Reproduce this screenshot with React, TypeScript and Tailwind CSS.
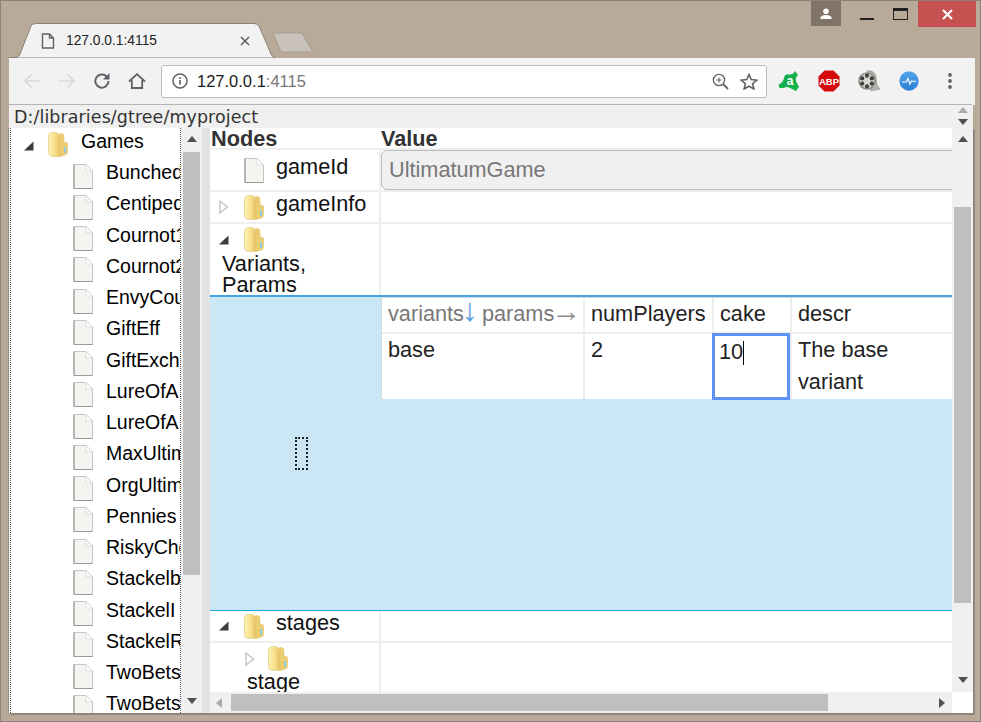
import React from "react";

const games = [
  "Bunched",
  "Centipede",
  "Cournot1",
  "Cournot2",
  "EnvyCou",
  "GiftEff",
  "GiftExch",
  "LureOfA",
  "LureOfA",
  "MaxUltim",
  "OrgUltim",
  "Pennies",
  "RiskyChe",
  "Stackelb",
  "StackelI",
  "StackelR",
  "TwoBets",
  "TwoBets",
];

function FolderIcon({ className = "" }: { className?: string }) {
  return (
    <svg width="20" height="25" viewBox="0 0 20 25" className={`shrink-0 ${className}`}>
      <defs>
        <linearGradient id="fold" x1="0" y1="0" x2="1" y2="0">
          <stop offset="0" stopColor="#fdf3b4" />
          <stop offset="0.55" stopColor="#f8e08e" />
          <stop offset="1" stopColor="#e6c25f" />
        </linearGradient>
      </defs>
      <path d="M0.5 4 Q0.5 0.5 4 0.5 L8 0.5 Q12 1.5 12 5 L12 24.5 L4 24.5 Q0.5 24 0.5 20 Z" fill="url(#fold)" stroke="#e3cd83" strokeWidth="0.7" />
      <path d="M12 1.5 L15 2 Q16 2.5 16 5 L16 10 L19.5 11 L19.5 20 Q19.5 22.5 17.5 23 L12 24.5 Z" fill="#ecce72" stroke="#dcbd62" strokeWidth="0.5" />
      <rect x="16" y="15" width="2" height="6" fill="#8ccbd8" />
    </svg>
  );
}

function FileIcon({ className = "" }: { className?: string }) {
  return (
    <svg width="20" height="25" viewBox="0 0 20 25" className={`shrink-0 ${className}`}>
      <path d="M1 0.5 L13 0.5 L19.5 7 L19.5 24.5 L1 24.5 Z" fill="#f4f5f1" stroke="#c4c4c4" strokeWidth="1" />
      <path d="M1 24.5 L19.5 24.5 M1 0.5 L1 24.5" stroke="#9a9a9a" strokeWidth="1.2" fill="none" />
      <path d="M13 0.5 L13 7 L19.5 7 Z" fill="#fff" stroke="#d4d4d4" strokeWidth="0.8" />
    </svg>
  );
}

function Open({ className = "" }: { className?: string }) {
  return (
    <svg width="10" height="10" viewBox="0 0 10 10" className={`shrink-0 ${className}`}>
      <path d="M0 9.5 L9.5 0.5 L9.5 9.5 Z" fill="#3c3c3c" />
    </svg>
  );
}

function Closed({ className = "" }: { className?: string }) {
  return (
    <svg width="10" height="14" viewBox="0 0 10 14" className={`shrink-0 ${className}`}>
      <path d="M1 1 L8.5 7 L1 13 Z" fill="#fff" stroke="#c4c4c4" strokeWidth="1.4" />
    </svg>
  );
}

function Arrow({ dir, color = "#505050" }: { dir: "up" | "down" | "left" | "right"; color?: string }) {
  const d = {
    up: "M0 7 L5 1 L10 7 Z",
    down: "M0 2 L10 2 L5 8 Z",
    left: "M7 0 L7 10 L1 5 Z",
    right: "M2 0 L2 10 L8 5 Z",
  }[dir];
  return (
    <svg width="10" height="10" viewBox="0 0 10 10" className="shrink-0">
      <path d={d} fill={color} />
    </svg>
  );
}

function Tab() {
  return (
    <div className="relative w-[266px] h-[35px]">
      <svg width="266" height="35" viewBox="0 0 266 35" className="absolute inset-0">
        <path d="M0 35 L0 34.5 L8 34.5 Q10 34 11 31 L22 3 Q23 0.5 27 0.5 L245 0.5 Q249 0.5 250 3 L262 31 Q263 34 266 34.5 L266 35 Z" fill="#f2f2f2" stroke="#8a8175" strokeWidth="1" />
      </svg>
      <div className="relative flex items-center h-full pl-[32px] pr-[25px]">
        <svg width="14" height="16" viewBox="0 0 14 16" className="shrink-0">
          <path d="M1.5 1 L8.5 1 L12.5 5 L12.5 15 L1.5 15 Z M8.5 1 L8.5 5 L12.5 5" fill="none" stroke="#5f6368" strokeWidth="1.4" />
        </svg>
        <span className="ml-[11px] mt-[1px] text-[13.8px] text-[#222]">127.0.0.1:4115</span>
        <svg width="10" height="10" viewBox="0 0 10 10" className="ml-auto">
          <path d="M1 1 L9 9 M9 1 L1 9" stroke="#555" strokeWidth="1.4" />
        </svg>
      </div>
    </div>
  );
}

function ExtensionIcons() {
  return (
    <div className="flex items-center gap-[18px] ml-[11px]">
      <svg width="22" height="22" viewBox="0 0 22 22">
        <path d="M17 1 L20 5 Q17 8 18 11 L21 17 L18 21 L12 18 Q8 16 6 18 L1.5 18 L0.5 14.5 Q5 13 6 8 Q7 3.5 11 4.5 Q15 5 17 1 Z" fill="#16b04f" />
        <text x="12" y="15" textAnchor="middle" fontSize="12" fontWeight="700" fill="#fff" fontFamily="Liberation Sans, sans-serif">a</text>
      </svg>
      <svg width="22" height="22" viewBox="0 0 22 22">
        <path d="M6.5 0.5 L15.5 0.5 L21.5 6.5 L21.5 15.5 L15.5 21.5 L6.5 21.5 L0.5 15.5 L0.5 6.5 Z" fill="#d60a0a" />
        <text x="11" y="14.5" textAnchor="middle" fontSize="9.5" fontWeight="700" fill="#fff" fontFamily="Liberation Sans, sans-serif">ABP</text>
      </svg>
      <svg width="22" height="22" viewBox="0 0 22 22">
        <path d="M9 1 Q16 0 18 6 L19 15 L22 19 L13 21 Z" fill="#b4b4ac" stroke="#8e8e88" strokeWidth="0.6" />
        <circle cx="9" cy="11" r="8.8" fill="#8e8e88" />
        <circle cx="9" cy="11" r="7.2" fill="#d8d8d2" />
        <circle cx="9" cy="5.7" r="2.1" fill="#3f3f3f" />
        <circle cx="9" cy="16.3" r="2.1" fill="#3f3f3f" />
        <circle cx="4.2" cy="8.4" r="2.1" fill="#3f3f3f" />
        <circle cx="13.8" cy="8.4" r="2.1" fill="#3f3f3f" />
        <circle cx="4.2" cy="13.6" r="2.1" fill="#3f3f3f" />
        <circle cx="13.8" cy="13.6" r="2.1" fill="#3f3f3f" />
      </svg>
      <svg width="20" height="20" viewBox="0 0 20 20" className="ml-[1px]">
        <defs>
          <linearGradient id="pulse" x1="0" y1="0" x2="0" y2="1">
            <stop offset="0" stopColor="#55a5ea" />
            <stop offset="1" stopColor="#2a7fd8" />
          </linearGradient>
        </defs>
        <circle cx="10" cy="10" r="9.7" fill="url(#pulse)" />
        <path d="M3 11 L7.5 11 L9 7.5 L11 13 L12.5 10 L17 10.5" fill="none" stroke="#fff" strokeWidth="1.1" />
      </svg>
      <svg width="4" height="18" viewBox="0 0 4 18" className="ml-[11px]">
        <circle cx="2" cy="3" r="1.9" fill="#5f6368" />
        <circle cx="2" cy="9" r="1.9" fill="#5f6368" />
        <circle cx="2" cy="15" r="1.9" fill="#5f6368" />
      </svg>
    </div>
  );
}

function Toolbar() {
  return (
    <div className="h-[47px] bg-[#f2f2f2] mr-[1px] flex flex-col shrink-0">
      <div className="h-[46px] flex items-center pl-[14px]">
        <svg width="18" height="16" viewBox="0 0 18 16">
          <path d="M17 8 L2 8 M8.5 1.5 L2 8 L8.5 14.5" fill="none" stroke="#d8d8d8" strokeWidth="1.7" />
        </svg>
        <svg width="18" height="16" viewBox="0 0 18 16" className="ml-[17px]">
          <path d="M1 8 L16 8 M9.5 1.5 L16 8 L9.5 14.5" fill="none" stroke="#d8d8d8" strokeWidth="1.7" />
        </svg>
        <svg width="18" height="18" viewBox="0 0 18 18" className="ml-[17px]">
          <path d="M15.5 9 A6.6 6.6 0 1 1 13.4 4.2" fill="none" stroke="#5f6368" strokeWidth="2" />
          <path d="M16.5 1 L16.5 7.5 L10 7.5 Z" fill="#5f6368" />
        </svg>
        <svg width="18" height="16" viewBox="0 0 18 16" className="ml-[17px]">
          <path d="M1 8.5 L9 1.2 L17 8.5 M3.8 7 L3.8 15 L14.2 15 L14.2 7" fill="none" stroke="#5f6368" strokeWidth="1.8" />
        </svg>
        <div className="ml-[15px] w-[606px] h-[33px] bg-white border border-[#bdbdbd] rounded-[3px] flex items-center pl-[10px] pr-[8px] shrink-0">
          <svg width="16" height="16" viewBox="0 0 16 16" className="shrink-0">
            <circle cx="8" cy="8" r="7" fill="none" stroke="#5f6368" strokeWidth="1.5" />
            <rect x="7.2" y="7" width="1.7" height="4.6" fill="#5f6368" />
            <rect x="7.2" y="4.2" width="1.7" height="1.7" fill="#5f6368" />
          </svg>
          <span className="ml-[9px] text-[16.5px] text-[#1a1a1a]">
            127.0.0.1<span className="text-[#777]">:4115</span>
          </span>
          <svg width="17" height="17" viewBox="0 0 17 17" className="ml-auto">
            <circle cx="7" cy="7" r="5.6" fill="none" stroke="#5f6368" strokeWidth="1.4" />
            <path d="M11 11 L16 16" stroke="#5f6368" strokeWidth="1.8" />
            <path d="M4.5 7 L9.5 7 M7 4.5 L7 9.5" stroke="#5f6368" strokeWidth="1.1" />
          </svg>
          <svg width="18" height="17" viewBox="0 0 18 17" className="ml-[11px]">
            <path d="M9 1.5 L11.2 6.6 L16.8 7.1 L12.6 10.7 L13.9 16 L9 13.2 L4.1 16 L5.4 10.7 L1.2 7.1 L6.8 6.6 Z" fill="none" stroke="#5f6368" strokeWidth="1.6" />
          </svg>
        </div>
        <ExtensionIcons />
      </div>
      <div className="h-[1px] bg-[#b5b5b5] mr-[3px]" />
    </div>
  );
}

function PathBar() {
  return (
    <div className="h-[23px] bg-[#f0f0f0] flex items-center pl-[5px] pr-[2px] mr-[3px] shrink-0">
      <span className="mt-[1px] text-[17.45px] tracking-[0.1px] text-[#333] font-['DejaVu_Sans',sans-serif]">
        D:/libraries/gtree/myproject
      </span>
      <div className="ml-auto flex flex-col items-center gap-[1px] w-[16px]">
        <Arrow dir="up" color="#a8a8a8" />
        <Arrow dir="down" color="#505050" />
      </div>
    </div>
  );
}

function GameTree() {
  return (
    <div className="w-[172px] shrink-0 bg-white overflow-hidden flex flex-col border-r border-dotted border-[#555]">
      <div className="h-full ml-[1px] border-l border-dotted border-[#555] text-[19.5px] text-black">
        <div className="h-[29px] flex items-center pl-[13px]">
          <Open className="mt-[6px]" />
          <FolderIcon className="ml-[14px] mt-[4px]" />
          <span className="ml-[13px] -mt-[2px]">Games</span>
        </div>
        {games.map((name, i) => (
          <div key={i} className="h-[31.25px] flex items-center pl-[62px] whitespace-nowrap">
            <FileIcon className="mt-[7px]" />
            <span className="ml-[13px]">{name}</span>
          </div>
        ))}
      </div>
    </div>
  );
}

function VScroll({ className = "", children }: { className?: string; children: React.ReactNode }) {
  return (
    <div className={`bg-[#f0f0f0] flex flex-col items-center shrink-0 ${className}`}>{children}</div>
  );
}

function ParamTable() {
  const cell = "bg-white px-[6px] leading-[32px]";
  return (
    <div className="grid grid-cols-[201px_127px_76px_200px] grid-rows-[34px_65px] gap-[2px] bg-[#eeeeee] border-l border-t border-[#d8d8d8] w-[640px] h-[102px] text-[#222]">
      <div className={`${cell} text-[#777] whitespace-nowrap`}>
        variants
        <span className="inline-block w-[13px] text-[32px] leading-[20px] text-[#5b9bd5] font-light -translate-x-[2px]">↓</span>
        <span className="ml-[5px]">params</span>
        <span className="inline-block w-[25px] text-[30px] leading-[20px] text-[#8a8a8a] -ml-[3px]">→</span>
      </div>
      <div className={cell}>numPlayers</div>
      <div className={cell}>cake</div>
      <div className={cell}>descr</div>
      <div className={cell}>base</div>
      <div className={cell}>2</div>
      <div className="bg-white pl-[4px] leading-[32px] border-[3px] border-[#5b93f4] -ml-[2px] -mt-[1px] -mb-[1px]">
        10<span className="inline-block w-[1px] h-[24px] bg-black align-middle" />
      </div>
      <div className={cell}>
        The base
        <br />
        variant
      </div>
    </div>
  );
}

function NodeTable() {
  const colA = "w-[171px] shrink-0 border-r-2 border-[#eeeeee]";
  return (
    <div className="flex-1 min-w-0 bg-white overflow-hidden text-[21.7px] text-[#111] flex flex-col leading-[21px]">
      <div className="h-[22px] flex font-bold text-[#333] shrink-0">
        <div className="w-[171px] pl-[1px] border-b-2 border-[#eeeeee]">Nodes</div>
        <div className="flex-1 border-b-2 border-[#eeeeee]">Value</div>
      </div>
      <div className="h-[42px] flex border-b-2 border-[#eeeeee] shrink-0">
        <div className={`${colA} flex pl-[34px] pt-[6px] gap-[12px]`}>
          <FileIcon className="mt-[2px]" />
          <span>gameId</span>
        </div>
        <div className="flex-1">
          <div className="h-[40px] w-[600px] rounded-[6px] border border-[#bbbbbb] bg-[#f0f0f0] text-[#777] flex items-center pl-[7px] pb-[2px]">
            UltimatumGame
          </div>
        </div>
      </div>
      <div className="h-[32px] flex border-b-2 border-[#eeeeee] shrink-0">
        <div className={`${colA} flex items-center pl-[9px]`}>
          <Closed />
          <FolderIcon className="ml-[15px]" />
          <span className="ml-[12px] -mt-[8px]">gameInfo</span>
        </div>
      </div>
      <div className="h-[71px] flex shrink-0">
        <div className={`${colA} pl-[9px] pt-[3px]`}>
          <div className="flex items-center">
            <Open />
            <FolderIcon className="ml-[15px]" />
          </div>
          <div className="leading-[21px] ml-[3px] mt-[1px]">
            Variants,
            <br />
            Params
          </div>
        </div>
      </div>
      <div className="h-[316px] flex bg-[#cbe7f6] border-t-2 border-t-[#43a6e3] border-b border-b-[#1ca7e0] shrink-0">
        <div className="w-[171px] shrink-0 flex items-center pl-[85px]">
          <div className="w-[13px] h-[33px] border-2 border-dotted border-[#222]" />
        </div>
        <ParamTable />
      </div>
      <div className="h-[32px] flex border-b-2 border-[#eeeeee] shrink-0">
        <div className={`${colA} flex items-center pl-[9px]`}>
          <Open />
          <FolderIcon className="ml-[15px]" />
          <span className="ml-[12px] -mt-[8px]">stages</span>
        </div>
      </div>
      <div className="flex-1 flex min-h-0">
        <div className={`${colA} pl-[35px] pt-[3px] overflow-hidden`}>
          <div className="flex items-center">
            <Closed />
            <FolderIcon className="ml-[13px]" />
          </div>
          <div className="ml-[2px]">stage</div>
        </div>
      </div>
    </div>
  );
}

function RightPane() {
  return (
    <div className="flex-1 min-w-0 flex flex-col">
      <div className="flex-1 min-h-0 flex">
        <NodeTable />
        <VScroll className="w-[21px] justify-between pt-[7px] pb-[7px]">
          <div className="flex flex-col items-center w-full">
            <Arrow dir="up" />
            <div className="w-[17px] h-[396px] bg-[#bfbfbf] mt-[62px]" />
          </div>
          <Arrow dir="down" />
        </VScroll>
      </div>
      <div className="h-[21px] bg-[#f0f0f0] flex items-center shrink-0 mr-[21px] pl-[5px] pr-[5px]">
        <Arrow dir="left" color="#a8a8a8" />
        <div className="w-[597px] h-[17px] bg-[#bfbfbf] ml-[6px]" />
        <div className="ml-auto">
          <Arrow dir="right" />
        </div>
      </div>
    </div>
  );
}

export default function App() {
  return (
    <div className="w-[981px] h-[722px] bg-[#b9a998] border border-[#8c8277] pl-[8px] pr-[4px] pb-[8px] flex flex-col font-['Liberation_Sans',Arial,sans-serif] overflow-hidden">
      <div className="h-[57px] flex justify-between shrink-0">
        <div className="flex items-end">
          <Tab />
          <svg width="42" height="22" viewBox="0 0 42 22" className="mb-[4px] -ml-[3px]">
            <path d="M1 1 L30 1 L41 20 L9 20 Z" fill="#c9c2bb" stroke="#a59a8e" strokeWidth="1" strokeLinejoin="round" />
          </svg>
        </div>
        <div className="flex items-start">
          <div className="w-[30px] h-[25px] bg-[#7f7467] flex items-center justify-center">
            <svg width="12" height="12" viewBox="0 0 12 12">
              <circle cx="6" cy="3.2" r="2.8" fill="#fff" />
              <path d="M0.5 11 L0.5 9 Q2 7 6 7 Q10 7 11.5 9 L11.5 11 Z" fill="#fff" />
            </svg>
          </div>
          <div className="w-[52px] h-[26px] flex items-end justify-center">
            <div className="w-[14px] h-[2px] bg-[#222] mb-[7px]" />
          </div>
          <div className="w-[25px] h-[26px] flex items-center">
            <div className="w-[15px] h-[12px] border border-[#222] border-t-[3px]" />
          </div>
          <div className="w-[58px] h-[26px] bg-[#c75050] flex items-center justify-center">
            <svg width="11" height="11" viewBox="0 0 11 11">
              <path d="M1 1 L10 10 M10 1 L1 10" stroke="#fff" strokeWidth="2.2" />
            </svg>
          </div>
        </div>
      </div>
      <div className="flex-1 min-h-0 flex flex-col">
        <Toolbar />
        <PathBar />
        <div className="flex-1 min-h-0 flex bg-white mr-[3px] shadow-[1px_1px_0_#8f8578,2px_2px_0_#8f8578,-1px_0_0_#9a8f83]">
          <GameTree />
          <VScroll className="w-[21px] justify-between py-[7px]">
            <div className="flex flex-col items-center w-full">
              <Arrow dir="up" color="#505050" />
              <div className="w-[17px] h-[423px] bg-[#bfbfbf] mt-[7px]" />
            </div>
            <Arrow dir="down" />
          </VScroll>
          <div className="w-[8px] bg-[#e2e2e2] shrink-0" />
          <RightPane />
        </div>
      </div>
    </div>
  );
}
